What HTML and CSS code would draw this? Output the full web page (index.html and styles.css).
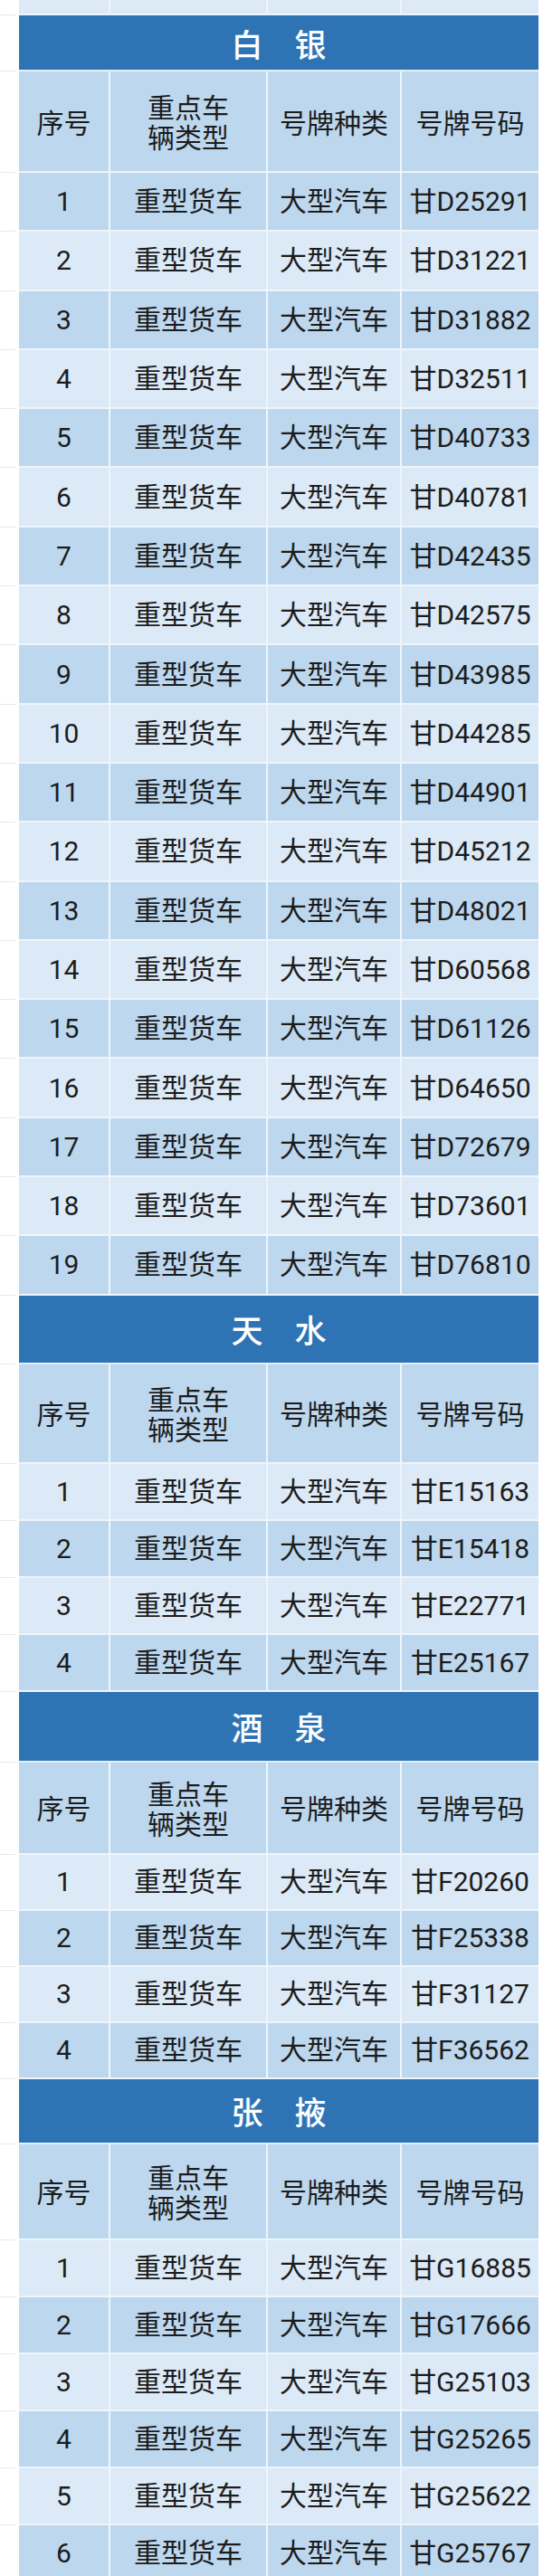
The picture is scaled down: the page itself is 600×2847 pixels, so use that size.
FILE: index.html
```html
<!DOCTYPE html>
<html lang="zh">
<head>
<meta charset="utf-8">
<title>重点车辆</title>
<link rel="stylesheet" href="styles.css">
</head>
<body>
<div class="sheet">
  <div class="row top light"><span class="gutter"></span><div class="cell c1"></div><div class="cell c2"></div><div class="cell c3"></div><div class="cell c4"></div></div>

  <section class="city city-a">
    <div class="row bandrow"><span class="gutter"></span><div class="band">白　银</div></div>
    <div class="row hdr"><span class="gutter"></span><div class="cell c1">序号</div><div class="cell c2"><div class="two"><span class="ln">重点车</span><span class="ln">辆类型</span></div></div><div class="cell c3">号牌种类</div><div class="cell c4">号牌号码</div></div>
    <div class="row data dark"><span class="gutter"></span><div class="cell c1">1</div><div class="cell c2">重型货车</div><div class="cell c3">大型汽车</div><div class="cell c4">甘D25291</div></div>
    <div class="row data light"><span class="gutter"></span><div class="cell c1">2</div><div class="cell c2">重型货车</div><div class="cell c3">大型汽车</div><div class="cell c4">甘D31221</div></div>
    <div class="row data dark"><span class="gutter"></span><div class="cell c1">3</div><div class="cell c2">重型货车</div><div class="cell c3">大型汽车</div><div class="cell c4">甘D31882</div></div>
    <div class="row data light"><span class="gutter"></span><div class="cell c1">4</div><div class="cell c2">重型货车</div><div class="cell c3">大型汽车</div><div class="cell c4">甘D32511</div></div>
    <div class="row data dark"><span class="gutter"></span><div class="cell c1">5</div><div class="cell c2">重型货车</div><div class="cell c3">大型汽车</div><div class="cell c4">甘D40733</div></div>
    <div class="row data light"><span class="gutter"></span><div class="cell c1">6</div><div class="cell c2">重型货车</div><div class="cell c3">大型汽车</div><div class="cell c4">甘D40781</div></div>
    <div class="row data dark"><span class="gutter"></span><div class="cell c1">7</div><div class="cell c2">重型货车</div><div class="cell c3">大型汽车</div><div class="cell c4">甘D42435</div></div>
    <div class="row data light"><span class="gutter"></span><div class="cell c1">8</div><div class="cell c2">重型货车</div><div class="cell c3">大型汽车</div><div class="cell c4">甘D42575</div></div>
    <div class="row data dark"><span class="gutter"></span><div class="cell c1">9</div><div class="cell c2">重型货车</div><div class="cell c3">大型汽车</div><div class="cell c4">甘D43985</div></div>
    <div class="row data light"><span class="gutter"></span><div class="cell c1">10</div><div class="cell c2">重型货车</div><div class="cell c3">大型汽车</div><div class="cell c4">甘D44285</div></div>
    <div class="row data dark"><span class="gutter"></span><div class="cell c1">11</div><div class="cell c2">重型货车</div><div class="cell c3">大型汽车</div><div class="cell c4">甘D44901</div></div>
    <div class="row data light"><span class="gutter"></span><div class="cell c1">12</div><div class="cell c2">重型货车</div><div class="cell c3">大型汽车</div><div class="cell c4">甘D45212</div></div>
    <div class="row data dark"><span class="gutter"></span><div class="cell c1">13</div><div class="cell c2">重型货车</div><div class="cell c3">大型汽车</div><div class="cell c4">甘D48021</div></div>
    <div class="row data light"><span class="gutter"></span><div class="cell c1">14</div><div class="cell c2">重型货车</div><div class="cell c3">大型汽车</div><div class="cell c4">甘D60568</div></div>
    <div class="row data dark"><span class="gutter"></span><div class="cell c1">15</div><div class="cell c2">重型货车</div><div class="cell c3">大型汽车</div><div class="cell c4">甘D61126</div></div>
    <div class="row data light"><span class="gutter"></span><div class="cell c1">16</div><div class="cell c2">重型货车</div><div class="cell c3">大型汽车</div><div class="cell c4">甘D64650</div></div>
    <div class="row data dark"><span class="gutter"></span><div class="cell c1">17</div><div class="cell c2">重型货车</div><div class="cell c3">大型汽车</div><div class="cell c4">甘D72679</div></div>
    <div class="row data light"><span class="gutter"></span><div class="cell c1">18</div><div class="cell c2">重型货车</div><div class="cell c3">大型汽车</div><div class="cell c4">甘D73601</div></div>
    <div class="row data dark"><span class="gutter"></span><div class="cell c1">19</div><div class="cell c2">重型货车</div><div class="cell c3">大型汽车</div><div class="cell c4">甘D76810</div></div>
  </section>

  <section class="city city-b">
    <div class="row bandrow"><span class="gutter"></span><div class="band">天　水</div></div>
    <div class="row hdr"><span class="gutter"></span><div class="cell c1">序号</div><div class="cell c2"><div class="two"><span class="ln">重点车</span><span class="ln">辆类型</span></div></div><div class="cell c3">号牌种类</div><div class="cell c4">号牌号码</div></div>
    <div class="row data light"><span class="gutter"></span><div class="cell c1">1</div><div class="cell c2">重型货车</div><div class="cell c3">大型汽车</div><div class="cell c4">甘E15163</div></div>
    <div class="row data dark"><span class="gutter"></span><div class="cell c1">2</div><div class="cell c2">重型货车</div><div class="cell c3">大型汽车</div><div class="cell c4">甘E15418</div></div>
    <div class="row data light"><span class="gutter"></span><div class="cell c1">3</div><div class="cell c2">重型货车</div><div class="cell c3">大型汽车</div><div class="cell c4">甘E22771</div></div>
    <div class="row data dark"><span class="gutter"></span><div class="cell c1">4</div><div class="cell c2">重型货车</div><div class="cell c3">大型汽车</div><div class="cell c4">甘E25167</div></div>
  </section>

  <section class="city city-c">
    <div class="row bandrow"><span class="gutter"></span><div class="band">酒　泉</div></div>
    <div class="row hdr"><span class="gutter"></span><div class="cell c1">序号</div><div class="cell c2"><div class="two"><span class="ln">重点车</span><span class="ln">辆类型</span></div></div><div class="cell c3">号牌种类</div><div class="cell c4">号牌号码</div></div>
    <div class="row data light"><span class="gutter"></span><div class="cell c1">1</div><div class="cell c2">重型货车</div><div class="cell c3">大型汽车</div><div class="cell c4">甘F20260</div></div>
    <div class="row data dark"><span class="gutter"></span><div class="cell c1">2</div><div class="cell c2">重型货车</div><div class="cell c3">大型汽车</div><div class="cell c4">甘F25338</div></div>
    <div class="row data light"><span class="gutter"></span><div class="cell c1">3</div><div class="cell c2">重型货车</div><div class="cell c3">大型汽车</div><div class="cell c4">甘F31127</div></div>
    <div class="row data dark"><span class="gutter"></span><div class="cell c1">4</div><div class="cell c2">重型货车</div><div class="cell c3">大型汽车</div><div class="cell c4">甘F36562</div></div>
  </section>

  <section class="city city-d">
    <div class="row bandrow"><span class="gutter"></span><div class="band">张　掖</div></div>
    <div class="row hdr"><span class="gutter"></span><div class="cell c1">序号</div><div class="cell c2"><div class="two"><span class="ln">重点车</span><span class="ln">辆类型</span></div></div><div class="cell c3">号牌种类</div><div class="cell c4">号牌号码</div></div>
    <div class="row data light"><span class="gutter"></span><div class="cell c1">1</div><div class="cell c2">重型货车</div><div class="cell c3">大型汽车</div><div class="cell c4">甘G16885</div></div>
    <div class="row data dark"><span class="gutter"></span><div class="cell c1">2</div><div class="cell c2">重型货车</div><div class="cell c3">大型汽车</div><div class="cell c4">甘G17666</div></div>
    <div class="row data light"><span class="gutter"></span><div class="cell c1">3</div><div class="cell c2">重型货车</div><div class="cell c3">大型汽车</div><div class="cell c4">甘G25103</div></div>
    <div class="row data dark"><span class="gutter"></span><div class="cell c1">4</div><div class="cell c2">重型货车</div><div class="cell c3">大型汽车</div><div class="cell c4">甘G25265</div></div>
    <div class="row data light"><span class="gutter"></span><div class="cell c1">5</div><div class="cell c2">重型货车</div><div class="cell c3">大型汽车</div><div class="cell c4">甘G25622</div></div>
    <div class="row data dark"><span class="gutter"></span><div class="cell c1">6</div><div class="cell c2">重型货车</div><div class="cell c3">大型汽车</div><div class="cell c4">甘G25767</div></div>
  </section>
</div>
</body>
</html>
```

FILE: styles.css
```css
html, body {
  margin: 0;
  padding: 0;
  background: #ffffff;
}

.sheet {
  width: 600px;
  font-family: Roboto, "Noto Sans CJK SC", sans-serif;
  color: #1c1c1c;
  font-size: 30px;
}

.row {
  display: flex;
  box-sizing: border-box;
}

.gutter {
  flex: none;
  width: 17px;
  margin-right: 4px;
  box-sizing: border-box;
  border-bottom: 1px solid #e8e8e8;
}

.cell {
  flex: none;
  box-sizing: border-box;
  display: flex;
  align-items: center;
  justify-content: center;
  text-align: center;
  border-right: 2px solid #eef5fc;
  border-bottom: 2px solid #eef5fc;
  line-height: 1.1;
  white-space: nowrap;
}

.c1 { width: 101px; }
.c2 { width: 174px; }
.c3 { width: 148px; }
.c4 { width: 151px; border-right: none; }

.top { height: 17px; }

.dark .cell, .hdr .cell { background: #bdd7ee; }
.light .cell { background: #dce9f6; }

.band {
  flex: none;
  width: 574px;
  box-sizing: border-box;
  display: flex;
  align-items: center;
  justify-content: center;
  background: #2e74b5;
  color: #ffffff;
  font-family: "Noto Sans CJK SC", sans-serif;
  font-size: 35px;
  font-weight: 500;
  line-height: 1;
  border-bottom: 2px solid #e4eff9;
}

.hdr .cell {
  font-family: "Noto Sans CJK SC", sans-serif;
}

.two {
  display: flex;
  flex-direction: column;
  align-items: center;
}

.ln {
  display: block;
  height: 33px;
  line-height: 33px;
}

.city-a .bandrow { height: 62px; }
.city-a .hdr { height: 112px; }
.city-a .data { height: 65.3px; }

.city-b .bandrow { height: 76px; }
.city-b .hdr { height: 110px; }
.city-b .data { height: 63px; }

.city-c .bandrow { height: 78px; }
.city-c .hdr { height: 102px; }
.city-c .data { height: 62px; }

.city-d .bandrow { height: 72px; }
.city-d .hdr { height: 106px; }
.city-d .data { height: 63px; }

.row > .cell, .row > .band { height: 100%; }
```
